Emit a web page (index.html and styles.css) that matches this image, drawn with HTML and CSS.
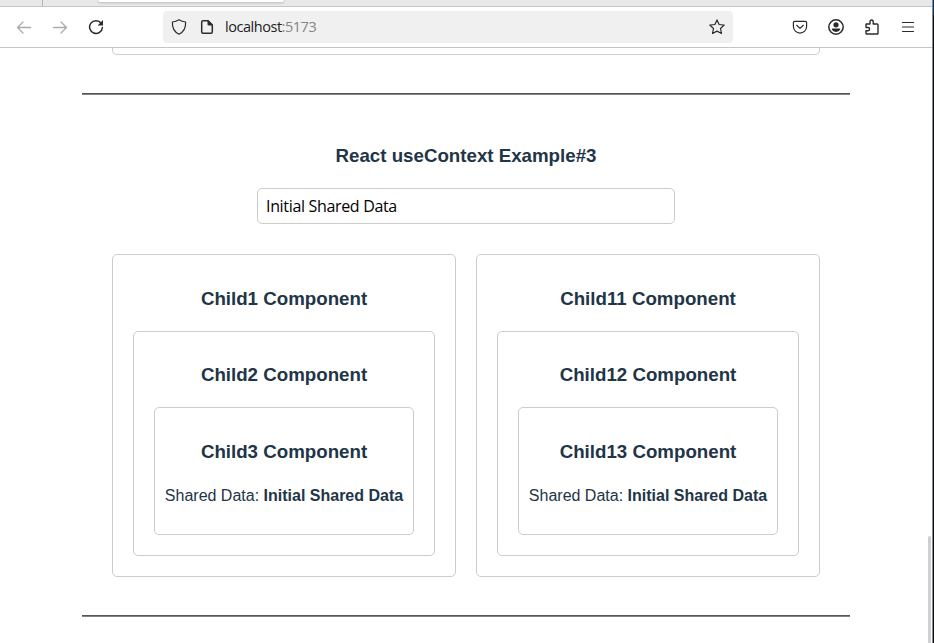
FILE: index.html
```html
<!DOCTYPE html>
<html lang="en">
<head>
<meta charset="utf-8">
<title>React useContext</title>
<link rel="stylesheet" href="styles.css">
</head>
<body>
<div class="screen">
  <div class="browser">
    <div class="tabstrip"><div class="tab-edge"></div><div class="tab"></div></div>
    <div class="toolbar">
      <div class="nav">
        <svg class="icon muted" viewBox="0 0 16 16"><path d="M14.500 8.500H1.500M7 3 1.500 8.500 7 14"/></svg>
        <svg class="icon muted" viewBox="0 0 16 16"><path d="M1.500 8.500h13M9 3l5.500 5.500L9 14"/></svg>
        <svg class="icon" viewBox="0 0 16 16"><path class="bold" d="M13.2 4.300A6.400 6.400 0 1 0 14.400 8.500"/><path class="solid" d="M15 1v5.400H9.600z"/></svg>
      </div>
      <div class="urlbar">
        <svg class="icon" viewBox="0 0 16 16"><path d="M8 .8c2.200 1.400 4 2 6.600 2.200.3 5.200-1.600 9.800-6.600 12.200C3 12.800 1.100 8.200 1.400 3 4 2.800 5.800 2.200 8 .8z"/></svg>
        <svg class="icon page-icon" viewBox="0 0 16 16"><path class="bold" d="M4 1.700h5l4.300 4.300v7a1.300 1.300 0 0 1-1.300 1.300H4A1.300 1.300 0 0 1 2.700 13V3A1.300 1.300 0 0 1 4 1.700z"/><path class="solid" d="M8.500 1.200h1L13.800 5.500v1H9.700a1.200 1.200 0 0 1-1.200-1.200z"/></svg>
        <span class="url">localhost<span class="port">:5173</span></span>
        <svg class="icon star" viewBox="0 0 16 16"><path d="m8 .9 2.100 4.600 5.100.6-3.700 3.400 1 5L8 12.100l-4.500 2.400 1-5L.8 6.100l5.100-.6z"/></svg>
      </div>
      <div class="actions">
        <svg class="icon" viewBox="0 0 16 16"><path d="M2.600 2.400h10.800A1.200 1.200 0 0 1 14.600 3.600V7.500a6.600 6.600 0 0 1-13.200 0V3.600A1.200 1.200 0 0 1 2.600 2.400zM4.700 6.300 8 9.400l3.300-3.100"/></svg>
        <svg class="icon" viewBox="0 0 16 16"><circle class="bold" cx="8" cy="8" r="7.200"/><circle class="solid" cx="8" cy="5.800" r="2.600"/><path class="solid" d="M4.800 9.400h6.400q1.100 0 1.100 1.200Q11 13 8 13t-4.300-2.400q0-1.200 1.100-1.200z"/></svg>
        <svg class="icon" viewBox="0 0 16 16"><path class="puzzle" d="M2 8.500V5.600q0-.6.600-.6H6V2.600a1.600 1.600 0 0 1 3.200 0V5h4q.8 0 .8.800v8.400q0 .8-.8.800H2.800q-.8 0-.8-.8v-2.500h2a1.600 1.600 0 0 0 0-3.200z"/></svg>
        <svg class="icon" viewBox="0 0 16 16"><path d="M2.500 3.500h11M2.500 8h11M2.500 12.500h11"/></svg>
      </div>
    </div>
    <main class="viewport">
      <div class="page">
        <div class="previous"></div>
        <hr class="rule">
        <section class="example">
          <h3>React useContext Example#3</h3>
          <input class="field" type="text" value="Initial Shared Data">
          <div class="columns">
            <div class="card">
              <h3>Child1 Component</h3>
              <div class="card">
                <h3>Child2 Component</h3>
                <div class="card">
                  <h3>Child3 Component</h3>
                  <p>Shared Data: <b>Initial Shared Data</b></p>
                </div>
              </div>
            </div>
            <div class="card">
              <h3>Child11 Component</h3>
              <div class="card">
                <h3>Child12 Component</h3>
                <div class="card">
                  <h3>Child13 Component</h3>
                  <p>Shared Data: <b>Initial Shared Data</b></p>
                </div>
              </div>
            </div>
          </div>
        </section>
        <hr class="rule">
      </div>
      <div class="scrollbar"></div>
    </main>
  </div>
  <div class="window-edge"></div>
</div>
</body>
</html>
```

FILE: styles.css
```css
* { box-sizing: border-box; }
body { margin: 0; overflow: hidden; background: #fff; }
.screen { display: flex; width: 934px; height: 643px; overflow: hidden; }
.browser { flex: 1; display: flex; flex-direction: column; }
.window-edge {
  width: 2px;
  border-left: 1px solid #8b8b8b;
  background: linear-gradient(#07325c 15px, #080c14 15px);
}

.tabstrip {
  display: flex;
  flex: none;
  height: 7px;
  background: #e8e8e8;
  border-bottom: 1px solid #c6c6c6;
}
.tab-edge { width: 43px; border-right: 1px solid #b5b5b5; }
.tab {
  width: 186px;
  height: 3px;
  margin-left: 55px;
  background: #fff;
  border-bottom: 1px solid #cbcbcb;
  border-radius: 0 0 3px 3px;
  box-shadow: 0 0 2px #aaa;
}

.toolbar {
  display: flex;
  align-items: center;
  flex: none;
  height: 41px;
  padding: 0 16px;
  border-bottom: 1px solid #c5c5c5;
}
.icon {
  display: block;
  flex: none;
  width: 16px;
  height: 16px;
  fill: none;
  stroke: #2b2b2b;
  stroke-width: 1.2;
  stroke-linejoin: round;
  stroke-linecap: round;
}
.icon .bold { stroke-width: 1.5; }
.icon .puzzle { stroke-width: 1.4; }
.icon .solid { fill: #2b2b2b; stroke: none; }
.muted { stroke: #aaa; stroke-width: 1.3; }
.nav { display: flex; gap: 20px; width: 147px; }
.urlbar {
  display: flex;
  align-items: center;
  width: 570px;
  height: 32px;
  padding: 0 8px;
  border-radius: 4px;
  background: #f0f0f0;
}
.page-icon { margin-left: 12px; }
.url {
  margin-left: 10px;
  font: 14.5px/20px "Open Sans", sans-serif;
  letter-spacing: -0.46px;
  color: #222;
}
.port { color: #858585; }
.star { margin-left: auto; }
.actions { display: flex; gap: 20px; margin-left: auto; }

.viewport { display: flex; flex: 1; min-height: 0; position: relative; }
.page {
  width: 768px;
  margin: 0 auto;
  font: 16px/24px "Liberation Sans", Arial, sans-serif;
  color: #213547;
  text-align: center;
}
.previous {
  height: 7px;
  margin: 0 30px 38px;
  border: 1px solid #ccc;
  border-top: 0;
  border-radius: 0 0 5px 5px;
}
.rule {
  height: 2px;
  margin: 0;
  border: 0;
  border-top: 1px solid #555;
  background: #828282;
}
.example { height: 520px; padding: 28px 30px 0; }
h3 { margin: 18.72px 0; font-size: 18.72px; line-height: 28.08px; }
p { margin: 16px 0; white-space: nowrap; }
.example > h3 { margin-bottom: 18.42px; }
.field {
  display: block;
  width: 418px;
  height: 36px;
  margin: 0 auto 30px;
  padding: 0 8px;
  border: 1px solid #ccc;
  border-radius: 5px;
  background: #fff;
  color: #000;
  font: 16px "Open Sans", sans-serif;
  letter-spacing: -0.33px;
}
.columns { display: flex; gap: 20px; }
.card { padding: 10px; border: 1px solid #ccc; border-radius: 5px; }
.card > h3 { margin: 19.53px 0 17.91px; }
.columns > .card { flex: none; width: 344px; }
.card .card { margin: 10px; }
.card .card .card { padding: 10px 0; }
.scrollbar {
  position: absolute;
  top: 488px;
  right: 1px;
  bottom: 0;
  width: 3px;
  border-radius: 2px 2px 0 0;
  background: #d0d0d0;
}
```
